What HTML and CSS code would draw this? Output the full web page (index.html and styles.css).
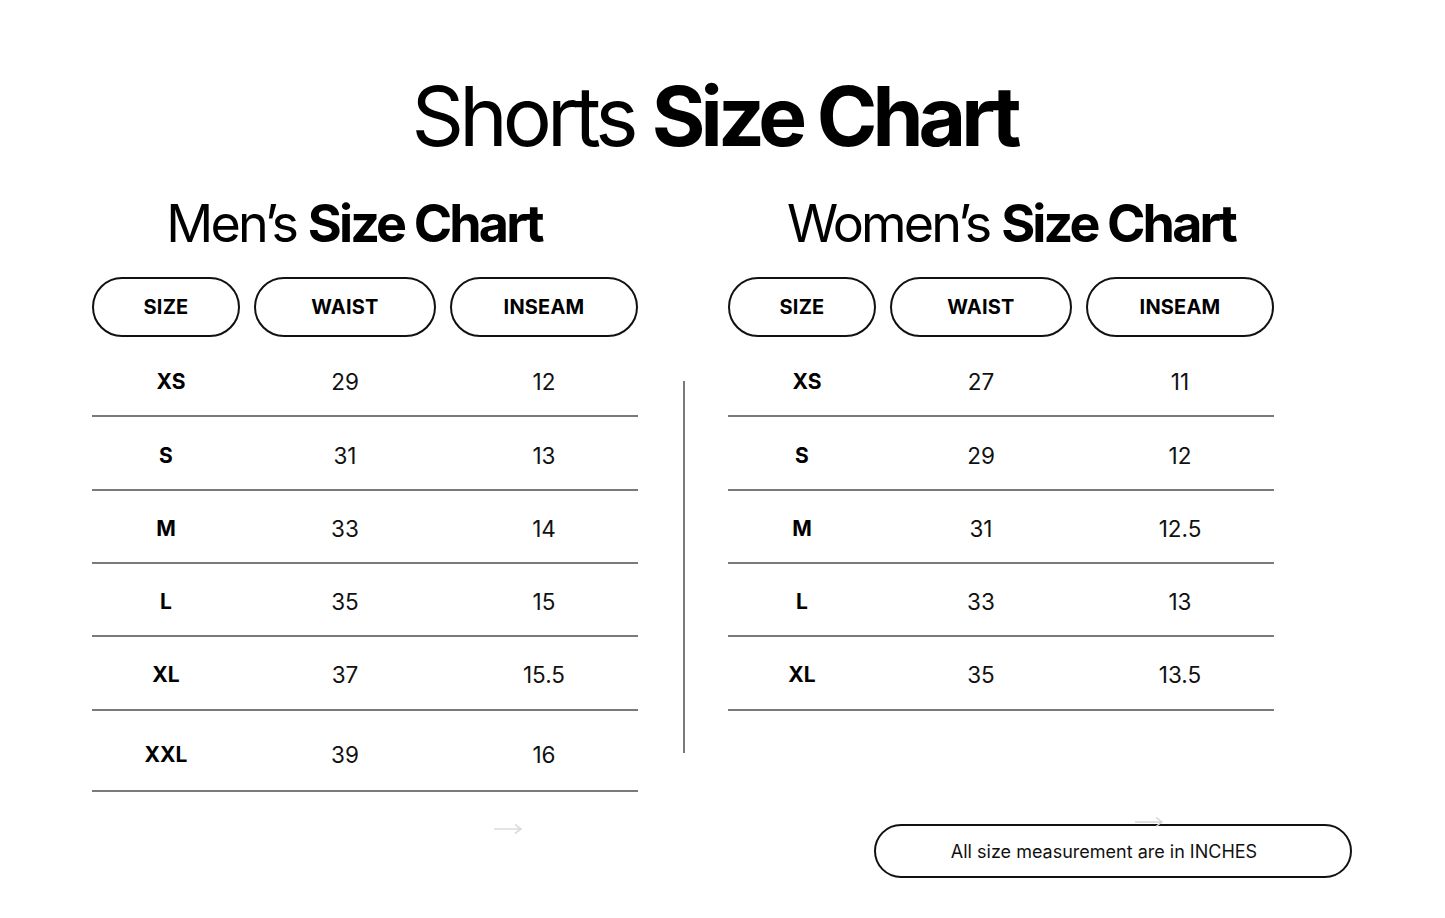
FILE: index.html
```html
<!DOCTYPE html>
<html lang="en">
<head>
<meta charset="utf-8">
<title>Shorts Size Chart</title>
<link rel="stylesheet" href="styles.css">
</head>
<body>
<main class="page">
  <h1 class="title">Shorts <b>Size Chart</b></h1>

  <div class="charts">
    <section class="chart chart-men">
      <h2 class="subtitle subtitle-men">Men’s <b>Size Chart</b></h2>
      <div class="thead">
        <div class="pill">SIZE</div>
        <div class="pill">WAIST</div>
        <div class="pill">INSEAM</div>
      </div>
      <div class="tbody">
        <div class="row"><span class="sz sz-xs">XS</span><span>29</span><span>12</span></div>
        <div class="row"><span class="sz">S</span><span>31</span><span>13</span></div>
        <div class="row"><span class="sz">M</span><span>33</span><span>14</span></div>
        <div class="row"><span class="sz">L</span><span>35</span><span>15</span></div>
        <div class="row"><span class="sz">XL</span><span>37</span><span>15.5</span></div>
        <div class="row row-last"><span class="sz">XXL</span><span>39</span><span>16</span></div>
      </div>
      <svg class="arrow arrow-men" viewBox="0 0 30 12" aria-hidden="true"><path d="M1 6H28M22 1.5L28 6L22 10.5" fill="none" stroke="#dcdcdc" stroke-width="1.6"/></svg>
    </section>

    <div class="divider"></div>

    <section class="chart chart-women">
      <h2 class="subtitle subtitle-women">Women’s <b>Size Chart</b></h2>
      <div class="thead">
        <div class="pill">SIZE</div>
        <div class="pill">WAIST</div>
        <div class="pill">INSEAM</div>
      </div>
      <div class="tbody">
        <div class="row"><span class="sz sz-xs">XS</span><span>27</span><span>11</span></div>
        <div class="row"><span class="sz">S</span><span>29</span><span>12</span></div>
        <div class="row"><span class="sz">M</span><span>31</span><span>12.5</span></div>
        <div class="row"><span class="sz">L</span><span>33</span><span>13</span></div>
        <div class="row"><span class="sz">XL</span><span>35</span><span>13.5</span></div>
      </div>
    </section>
  </div>

  <div class="note-wrap">
    <div class="note">
      All size measurement are in INCHES
      <svg class="arrow arrow-note" viewBox="0 0 30 12" aria-hidden="true"><path d="M1 6H28M22 1.5L28 6L22 10.5" fill="none" stroke="#d4d4d4" stroke-width="1.4"/></svg>
    </div>
  </div>
</main>
</body>
</html>
```

FILE: styles.css
```css
* { box-sizing: border-box; }

html, body {
  margin: 0;
  padding: 0;
  background: #ffffff;
}

body {
  font-family: Inter, "Liberation Sans", Arial, sans-serif;
  color: #111111;
}

.page {
  width: 1445px;
  height: 918px;
  padding-top: 76px;
  overflow: hidden;
}

.title {
  margin: 0;
  padding-right: 17px;
  font-size: 82px;
  line-height: 1;
  font-weight: 400;
  letter-spacing: -0.06em;
  text-align: center;
  color: #000;
}

.title b,
.subtitle b {
  font-weight: 700;
}

.charts {
  display: flex;
  align-items: flex-start;
  margin-top: 40px;
  padding-left: 92px;
}

.chart {
  position: relative;
  width: 546px;
}

.subtitle {
  margin: 0 0 27px;
  font-size: 52px;
  line-height: 1;
  font-weight: 400;
  letter-spacing: -0.055em;
  text-align: center;
  color: #000;
}

.subtitle-men { padding-right: 22px; }
.subtitle-women { padding-left: 20px; }

.thead,
.row {
  display: grid;
  grid-template-columns: 148px 182px 188px;
  column-gap: 14px;
}

.thead {
  height: 60px;
}

.pill {
  display: flex;
  align-items: center;
  justify-content: center;
  border: 2px solid #111;
  border-radius: 30px;
  font-size: 20px;
  font-weight: 700;
  letter-spacing: 0.01em;
  color: #000;
}

.tbody {
  margin-top: 6px;
}

.row {
  height: 74px;
  padding-top: 4px;
  align-items: center;
  text-align: center;
  border-bottom: 2px solid #7a7a7a;
  font-size: 22.5px;
  color: #111;
}

.row:nth-child(3),
.row:nth-child(4) {
  height: 73px;
}

.row:nth-child(5) {
  padding-top: 2px;
}

.row-last {
  height: 81px;
  padding-top: 8px;
}

.sz {
  font-size: 21px;
  font-weight: 700;
  color: #000;
}

.sz-xs {
  padding-left: 10px;
}

.divider {
  width: 2px;
  height: 372px;
  margin: 183px 43px 0 45px;
  background: #7a7a7a;
}

.arrow {
  position: absolute;
  width: 30px;
  height: 12px;
}

.arrow-men {
  left: 401px;
  top: calc(100% + 31px);
}

.note-wrap {
  display: flex;
  justify-content: flex-end;
  padding-right: 93px;
  margin-top: 32px;
}

.note {
  position: relative;
  width: 478px;
  height: 54px;
  padding-right: 18px;
  border: 2px solid #111;
  border-radius: 27px;
  display: flex;
  align-items: center;
  justify-content: center;
  font-size: 18px;
  color: #111;
}

.arrow-note {
  left: 258px;
  top: -10px;
}
```
